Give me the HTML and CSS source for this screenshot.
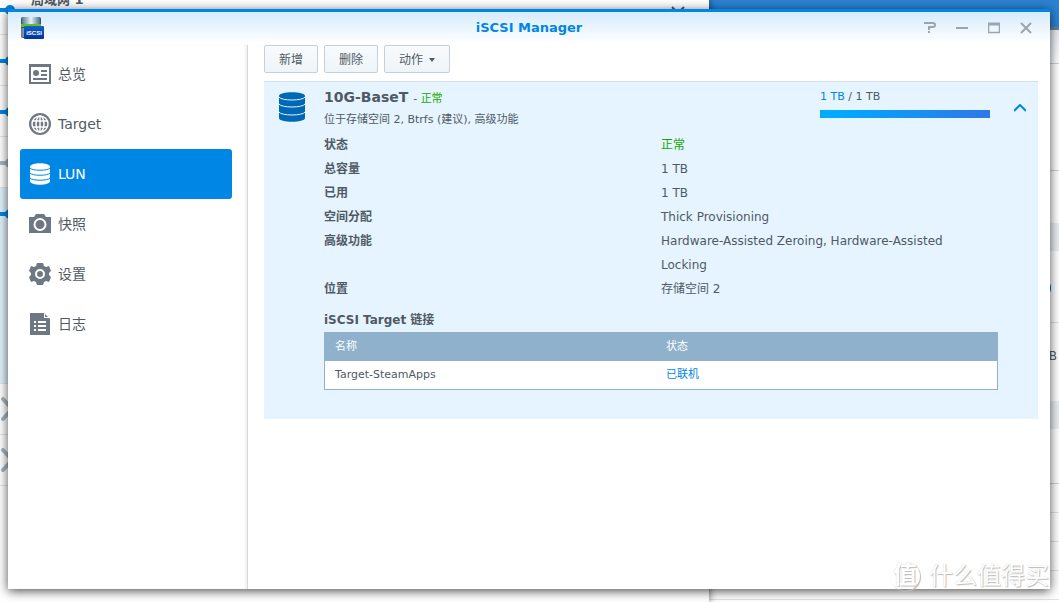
FILE: index.html
```html
<!DOCTYPE html>
<html lang="zh-CN">
<head>
<meta charset="utf-8">
<title>iSCSI Manager</title>
<link rel="stylesheet" href="styles.css">
</head>
<body>
<div class="desktop">
  <section class="back back-right">
    <div class="back-bar"></div>
    <div class="back-tools"></div>
    <div class="back-block"></div>
    <div class="back-panel"><div class="back-band"></div></div>
    <div class="back-panel back-size"><span class="back-dot"></span><span>1 TB</span></div>
    <div class="back-gap"></div>
    <div class="back-line"></div><div class="back-line"></div><div class="back-line"></div><div class="back-line"></div>
  </section>

  <section class="back back-left">
    <div class="net-row first"><i class="link"></i><b>局域网 1</b><svg class="chev" viewBox="0 0 14 8"><path d="M1 1l6 6 6-6"/></svg></div>
    <div class="net-row"><i class="link"></i></div>
    <div class="net-row"><i class="link"></i></div>
    <div class="net-row"><i class="link off"></i></div>
    <div class="net-row open"><i class="link"></i></div>
    <div class="net-row"><svg class="cross" viewBox="0 0 24 24"><path d="M3 2l18 20M21 2L3 22"/></svg></div>
    <div class="net-row"><svg class="cross" viewBox="0 0 24 24"><path d="M3 2l18 20M21 2L3 22"/></svg></div>
  </section>

  <main class="window">
    <header class="titlebar">
      <svg class="app-icon" viewBox="0 0 24 24" aria-hidden="true">
        <defs>
          <linearGradient id="steel" x1="0" x2="1" y1="0" y2="0"><stop offset="0" stop-color="#587a94"/><stop offset=".5" stop-color="#e3f3fb"/><stop offset="1" stop-color="#4e7089"/></linearGradient>
          <linearGradient id="badge" x1="0" x2="0" y1="0" y2="1"><stop offset="0" stop-color="#1560c8"/><stop offset="1" stop-color="#0034a0"/></linearGradient>
        </defs>
        <rect x="1" y="1" width="20" height="21" rx="2" fill="#35576d"/>
        <rect x="2" y="1" width="18" height="7" rx="1" fill="url(#steel)"/>
        <rect x="1" y="8" width="20" height="3" fill="#65bd24"/>
        <rect x="1" y="12" width="20" height="9" rx="1" fill="url(#steel)"/>
        <rect x="4" y="10" width="20" height="13" rx="1" fill="url(#badge)"/>
        <text x="14" y="19" text-anchor="middle" class="badge-text">iSCSI</text>
      </svg>
      <h1>iSCSI Manager</h1>
      <div class="controls">
        <button type="button" aria-label="帮助"><svg viewBox="0 0 12 12"><path d="M0 1h9q2 0 2 2t-2 2H5v3M5 9v2" stroke-width="2"/></svg></button>
        <button type="button" aria-label="最小化"><svg viewBox="0 0 12 12"><path d="M0 6h12" stroke-width="2"/></svg></button>
        <button type="button" aria-label="最大化"><svg viewBox="0 0 12 12"><path d="M0 2h12" stroke-width="3"/><path d="M.5 2v8.500h11V2" stroke-width="1.500"/></svg></button>
        <button type="button" aria-label="关闭"><svg viewBox="0 0 12 12"><path d="M1 1l10 10M11 1L1 11" stroke-width="2"/></svg></button>
      </div>
    </header>

    <div class="body">
      <nav class="sidebar">
        <a href="#overview"><svg viewBox="0 0 22 22"><path fill-rule="evenodd" d="M0 1h22v20H0zM2 4v15h18V4z"/><circle cx="7" cy="10" r="3"/><path d="M12 7h6v2h-6zM12 11h6v2h-6zM4 15h14v2H4z"/></svg>总览</a>
        <a href="#target"><svg viewBox="0 0 22 22"><circle cx="11" cy="11" r="11"/><g class="cut"><ellipse cx="11" cy="11" rx="4" ry="8"/><circle cx="11" cy="11" r="8"/><path d="M11 3v16M4 8h14M4 14h14"/></g></svg>Target</a>
        <a href="#lun" class="active" aria-current="page"><svg viewBox="0 0 22 22"><path d="M1 4c0-5 20-5 20 0v14c0 5-20 5-20 0z"/><path class="seam" d="M1 5c2 3 18 3 20 0M1 10c2 3 18 3 20 0M1 15c2 3 18 3 20 0"/></svg>LUN</a>
        <a href="#snapshot"><svg viewBox="0 0 22 22"><path fill-rule="evenodd" d="M0 4h5l2-3h8l2 3h5v16H0zM11 5a6 6 0 1 0 0 13 6 6 0 0 0 0-13zm0 2a4 4 0 1 1 0 9 4 4 0 0 1 0-9z"/></svg>快照</a>
        <a href="#settings"><svg viewBox="0 0 22 22"><path fill-rule="evenodd" d="M8 0h6l1 3 2 1 3-1 2 5-2 2v2l2 2-2 5-3-1-2 1-1 3H8l-1-3-2-1-3 1-2-5 2-2v-2L0 8l2-5 3 1 2-1zM11 6a5 5 0 1 0 0 10 5 5 0 0 0 0-10zm0 2a3 3 0 1 1 0 6 3 3 0 0 1 0-6z"/></svg>设置</a>
        <a href="#log"><svg viewBox="0 0 22 22"><path d="M1 0h14l6 6v16H1z"/><path fill="#fff" d="M15 0v5h6l-1-1h-4V1zM5 8h2v2H5zM9 8h8v2H9zM5 12h2v2H5zM9 12h8v2H9zM5 16h2v2H5zM9 16h8v2H9z"/></svg>日志</a>
      </nav>

      <section class="content">
        <div class="toolbar">
          <button type="button">新增</button>
          <button type="button">删除</button>
          <button type="button">动作<span class="caret"></span></button>
        </div>

        <article class="card">
          <header class="card-head">
            <svg class="disk" viewBox="0 0 26 30"><path fill="#0068b4" d="M0 4c0-5 26-5 26 0v22c0 5-26 5-26 0z"/><path class="disk-seam" d="M0 5c2 4 24 4 26 0M0 12c2 4 24 4 26 0M0 20c2 4 24 4 26 0"/></svg>
            <div class="summary">
              <h2>10G-BaseT <small>- <em>正常</em></small></h2>
              <p>位于存储空间 2, Btrfs (建议), 高级功能</p>
            </div>
            <div class="usage">
              <p><span>1 TB</span> / 1 TB</p>
              <div class="bar"></div>
            </div>
            <button class="fold" type="button" aria-label="收起"><svg viewBox="0 0 12 8"><path d="M0 7l6-6 6 6"/></svg></button>
          </header>

          <div class="details">
            <dl>
              <dt>状态</dt><dd class="ok">正常</dd>
              <dt>总容量</dt><dd>1 TB</dd>
              <dt>已用</dt><dd>1 TB</dd>
              <dt>空间分配</dt><dd>Thick Provisioning</dd>
              <dt>高级功能</dt><dd>Hardware-Assisted Zeroing, Hardware-Assisted Locking</dd>
              <dt>位置</dt><dd>存储空间 2</dd>
            </dl>
            <h3 id="links">iSCSI Target 链接</h3>
            <table aria-labelledby="links">
              <thead><tr><th>名称</th><th>状态</th></tr></thead>
              <tbody><tr><td>Target-SteamApps</td><td class="online">已联机</td></tr></tbody>
            </table>
          </div>
        </article>
      </section>
    </div>
  </main>

  <div class="watermark"><span class="seal">值</span><span>什么值得买</span></div>
</div>
</body>
</html>
```

FILE: styles.css
```css
* { box-sizing: border-box; }

body {
  margin: 0;
  color: #505a64;
  font: 12px/24px "DejaVu Sans", "Noto Sans CJK SC", sans-serif;
}

h1, h2, h3, p, dl, dd { margin: 0; }
button { font: inherit; color: inherit; cursor: pointer; }

.desktop {
  position: relative;
  height: 100vh;
  overflow: hidden;
  background: #fff;
}

/* Windows behind the active one */
.back { position: absolute; top: 0; bottom: 0; background: #fff; }
.back-left { left: 0; right: 350px; box-shadow: 0 0 8px rgba(0, 0, 0, .6); }
.back-right { left: 0; right: 0; }
.back-bar { height: 30px; background: #2c82d2; border-bottom: 3px solid #6d8191; }
.back-tools { height: 34px; background: linear-gradient(#e4eaf0, #fff); border-bottom: 1px solid #c4d3e0; }
.back-block { height: 107px; border-bottom: 1px solid #c4d3e0; }
.back-panel { height: 152px; padding-top: 52px; border-bottom: 1px solid #dce4ec; }
.back-band { height: 28px; background: #eaeff3; }
.back-size {
  position: relative;
  height: 161px;
  padding: 21px 2px 0 0;
  text-align: right;
  background: linear-gradient(#eaeff3, #eaeff3) 0 78px / 100% 28px no-repeat;
  border-color: #c4d3e0;
}
.back-dot { position: absolute; top: -39px; right: 8px; width: 4px; height: 8px; border-radius: 2px; background: #0086e5; }
.back-gap, .back-line { height: 29px; border-bottom: 1px solid #dce4ec; }

.net-row { position: relative; height: 51px; border-bottom: 1px solid #dfe6ec; }
.net-row.first { height: 35px; }
.net-row.open { height: 196px; background: #e0f1fc; }
.net-row b { position: absolute; left: 31px; top: -12px; font-size: 13px; }
.link { position: absolute; left: 0; top: 24px; width: 8px; height: 4px; background: #0086e5; }
.link::after { content: ""; position: absolute; left: 5px; top: -3px; width: 10px; height: 10px; border-radius: 5px; background: inherit; }
.first .link { top: 8px; }
.link.off { background: #a8b4be; }
.chev { position: absolute; right: 24px; top: 6px; width: 14px; fill: none; stroke: #505a64; stroke-width: 2; }
.cross { position: absolute; left: 0; top: 13px; width: 24px; fill: none; stroke: #a8b4be; stroke-width: 4; stroke-linecap: round; }

/* Active window */
.window {
  position: absolute;
  inset: 9px 9px 13px 8px;
  display: flex;
  flex-direction: column;
  background: #fff;
  border-top: 3px solid #0086e5;
  box-shadow: 0 2px 10px rgba(0, 0, 0, .7);
}

.titlebar {
  display: grid;
  grid-template-columns: 1fr auto 1fr;
  align-items: center;
  height: 33px;
  padding: 0 18px 2px 12px;
  background: linear-gradient(#d6ebfb, #fff 95%);
}
.titlebar h1 { padding-left: 6px; color: #0086e5; font-size: 13px; }
.app-icon { width: 24px; height: 24px; }
.badge-text { fill: #fff; font: bold 6px "Liberation Sans", sans-serif; }
.controls { display: flex; justify-content: flex-end; gap: 20px; }
.controls button { display: flex; padding: 0; border: 0; background: none; }
.controls svg { width: 12px; height: 12px; fill: none; stroke: #9aa5af; }

.body { flex: 1; display: flex; }

.sidebar {
  flex: none;
  width: 240px;
  padding: 4px 15px 0 12px;
  border-right: 1px solid #d4d8dc;
  box-shadow: inset -2px 0 2px #f0f2f4;
}
.sidebar a {
  display: flex;
  align-items: center;
  gap: 7px;
  height: 50px;
  padding-left: 9px;
  border-radius: 3px;
  color: #505a64;
  font-size: 14px;
  text-decoration: none;
}
.sidebar svg { width: 22px; height: 22px; fill: #6e7882; }
.sidebar .cut { fill: none; stroke: #fff; stroke-width: 1.500; }
.sidebar .active { background: #0086e5; color: #fff; }
.sidebar .active svg { fill: #fff; }
.seam { fill: none; stroke: #0086e5; stroke-width: 1; }

.content { flex: 1; min-width: 0; padding: 0 12px 0 16px; }
.toolbar { display: flex; gap: 6px; padding-bottom: 8px; }
.toolbar button {
  display: flex;
  align-items: center;
  height: 28px;
  padding: 2px 14px 0;
  border: 1px solid #c4d0da;
  border-radius: 2px;
  background: linear-gradient(#f8fbfd, #eef4f9);
}
.caret {
  margin-left: 6px;
  border: 3px solid transparent;
  border-top: 4px solid #505a64;
  border-bottom: 0;
}

.card {
  padding-bottom: 29px;
  background: #e5f4ff;
  border-top: 1px solid #d0e0ec;
}
.card-head { display: flex; height: 51px; padding: 5px 12px 0 15px; }
.disk { width: 26px; height: 30px; margin: 5px 19px 0 0; }
.disk-seam { fill: none; stroke: #e5f4ff; stroke-width: 1; }
.summary { flex: 1; }
.summary h2 { font-size: 14px; line-height: 20px; }
.summary small { font-size: 11px; font-weight: normal; }
.summary em { color: #1aa800; font-style: normal; }
.summary p { font-size: 11px; line-height: 22px; }
.usage { width: 170px; margin-right: 24px; font-size: 11px; }
.usage p { line-height: 20px; margin-bottom: 3px; }
.usage span { color: #0086e5; }
.bar { height: 8px; background: linear-gradient(90deg, #0af 10%, #2e78e6); }
.fold { display: flex; align-self: flex-start; margin-top: 17px; padding: 0; border: 0; background: none; }
.fold svg { width: 12px; height: 8px; fill: none; stroke: #0086e5; stroke-width: 2; }

.details { padding: 0 40px 0 60px; }
dl { display: grid; grid-template-columns: 1fr 1fr; }
dt { font-weight: bold; }
dd { padding-right: 16px; }
.ok { color: #1aa800; }
h3 { margin-top: 7px; font-size: 12px; }
table { width: 100%; border: 1px solid #8fb1cc; border-spacing: 0; table-layout: fixed; background: #fff; font-size: 11px; }
th, td { height: 28px; padding: 0 10px; line-height: 20px; text-align: left; }
th { background: #8fb1cc; color: #fff; font-weight: normal; }
th:first-child { width: 331px; }
.online { color: #0086e5; }

.watermark {
  position: absolute;
  right: 10px;
  bottom: 10px;
  display: flex;
  align-items: center;
  gap: 9px;
  color: #fff;
  font-size: 24px;
  line-height: 32px;
  text-shadow: 1px 1px 1px #bbb, 0 0 1px #ccc;
}
.seal {
  width: 30px;
  height: 30px;
  border-radius: 50%;
  font-weight: bold;
  line-height: 28px;
  text-align: center;
  box-shadow: 1px 1px 1px #bbb;
}
```
